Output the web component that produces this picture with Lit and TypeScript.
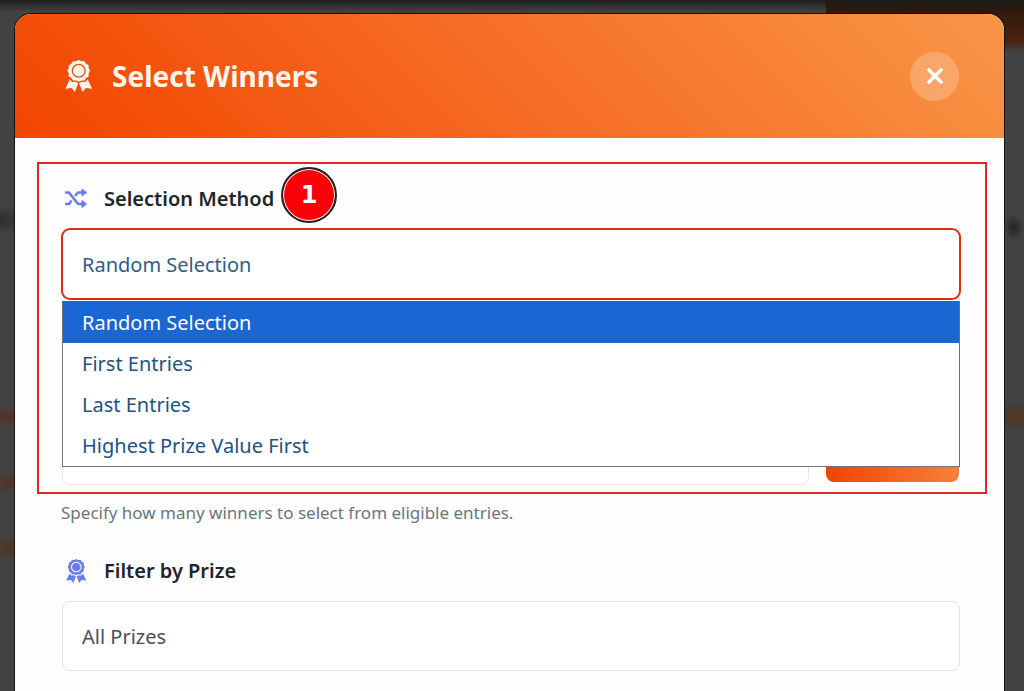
import { LitElement, html, css, svg } from "lit";
import { customElement, property, state } from "lit/decorators.js";

const ribbon = svg`
  <path fill-rule="evenodd" d="M12 0l2.300 1.100 2.700-.1 1.400 2.200 2.400 1.300-.1 2.600 1.200 2.300-1.200 2.300.1 2.700-2.400 1.300-1.400 2.300-2.700-.1L12 19l-2.300-1.100-2.700.1-1.400-2.300-2.400-1.300.1-2.700L2.100 9.400l1.200-2.300-.1-2.600 2.400-1.300L7 1l2.700.1zM12 3.200a6.200 6.200 0 1 0 0 12.400 6.200 6.200 0 0 0 0-12.400z"/>
  <circle cx="12" cy="9.400" r="5"/>
  <path d="M4.200 16.800l2 2.400 3-.1 2.400 1.200L8.600 28l-2.700-3.400-5.600.5zM19.800 16.800l-2 2.400-3-.1-2.400 1.200L15.400 28l2.700-3.400 5.600.5z"/>`;

@customElement("ribbon-icon")
class RibbonIcon extends LitElement {
  static styles = css`
    :host { display: block; }
    svg { display: block; height: 100%; margin: 0 auto; fill: currentColor; }
  `;
  render() {
    return html`<svg viewBox="0 0 24 28" aria-hidden="true">${ribbon}</svg>`;
  }
}

@customElement("option-list")
class OptionList extends LitElement {
  @property({ attribute: false }) options: string[] = [];
  @property() value = "";

  static styles = css`
    :host {
      display: block;
      box-sizing: border-box;
      border: 1px solid #6f7276;
      border-top-color: #1a66d2;
      background: #fff;
    }
    .option {
      display: block;
      width: 100%;
      height: 41px;
      padding: 0 19px;
      border: 0;
      background: none;
      color: #24527f;
      font: inherit;
      line-height: 41px;
      text-align: left;
    }
    .option[aria-selected="true"] { background: #1a66d2; color: #fff; }
  `;
  render() {
    return html`<div role="listbox" aria-label="Selection Method">
      ${this.options.map(
        (o) => html`<button
          class="option"
          role="option"
          aria-selected=${o === this.value ? "true" : "false"}
          @click=${() => this.dispatchEvent(new CustomEvent("pick", { detail: o }))}
        >${o}</button>`
      )}
    </div>`;
  }
}

@customElement("app-root")
class AppRoot extends LitElement {
  @state() private method = "Random Selection";
  private methods = ["Random Selection", "First Entries", "Last Entries", "Highest Prize Value First"];

  static styles = css`
    :host {
      display: block;
      box-sizing: border-box;
      height: 100vh;
      overflow: hidden;
      padding: 14px 20px 0 15px;
      background:
        linear-gradient(#1c1c1c, transparent 12px),
        radial-gradient(closest-side, #55301f, transparent) -10px 406px / 40px 22px no-repeat,
        radial-gradient(closest-side, #55301f, transparent) -10px 471px / 40px 22px no-repeat,
        radial-gradient(closest-side, #55301f, transparent) -10px 537px / 40px 22px no-repeat,
        radial-gradient(closest-side, #2e2e2f, transparent) -30px 206px / 60px 28px no-repeat,
        radial-gradient(closest-side, #523826, #4a382b 60%, transparent) right -20px top 404px / 60px 24px no-repeat,
        radial-gradient(closest-side, #232426, transparent) right 0 top 214px / 20px 26px no-repeat,
        linear-gradient(#2a1408, #4a2410 42px, #424242 52px) right top / 198px 52px no-repeat,
        #424242;
      font-family: "Noto Sans", "Open Sans", sans-serif;
      font-size: 20px;
      color: #212529;
    }
    .modal {
      min-height: 100vh;
      border-radius: 16px 16px 0 0;
      background: #fefefe;
      box-shadow: 0 0 0 1px #111;
    }
    .header {
      display: flex;
      align-items: center;
      gap: 17px;
      height: 124px;
      padding: 0 45px 0 48px;
      border-radius: 16px 16px 0 0;
      background: linear-gradient(45deg, #f24400, #f99648);
      color: #fff6ec;
    }
    .header ribbon-icon { width: 32px; height: 32px; }
    .title { flex: 1; margin: 0; font-size: 28px; line-height: 40px; font-weight: 700; }
    .close {
      display: grid;
      place-items: center;
      width: 49px;
      height: 49px;
      padding: 0;
      border: 0;
      border-radius: 50%;
      background: rgba(255, 255, 255, 0.22);
      color: #fff;
    }
    .close svg { width: 18px; height: 18px; }
    .body { position: relative; display: grid; gap: 32px; padding: 47px 43px 47px 46px; }
    .field { position: relative; }
    .label {
      display: flex;
      align-items: center;
      gap: 16px;
      margin-bottom: 16px;
      padding-left: 3px;
      line-height: 28px;
      font-weight: 600;
    }
    .label svg, .label ribbon-icon { width: 24px; height: 24px; color: #6a7de6; }
    .control {
      display: block;
      box-sizing: border-box;
      flex: 1;
      min-width: 0;
      width: calc(100% - 2px);
      height: 70px;
      margin: 0 1px;
      padding: 0 19px;
      border: 1px solid #e3e6e8;
      border-radius: 8px;
      appearance: none;
      outline: none;
      background: #fff;
      color: #495057;
      font: inherit;
    }
    .control.open { border-color: #e02a12; box-shadow: 0 0 0 1px #e02a12; color: #2f5d84; }
    .row { display: flex; gap: 16px; padding-right: 2px; }
    .max {
      width: 133px;
      height: 67px;
      border: 0;
      border-radius: 8px;
      background: linear-gradient(90deg, #f24400, #f5813a);
    }
    .help { min-height: 24px; margin: 16px 0 0; font-size: 17px; line-height: 24px; color: #6c757d; }
    .spacer { height: 44px; }
    .list { position: absolute; z-index: 1; top: 116px; left: 1px; right: 1px; }
    .callout {
      position: absolute;
      z-index: 2;
      inset: 24px 17px auto 22px;
      box-sizing: border-box;
      height: 332px;
      border: 2px solid #e32626;
      pointer-events: none;
    }
    .badge {
      position: absolute;
      top: 3px;
      left: 242px;
      display: grid;
      place-items: center;
      box-sizing: border-box;
      width: 56px;
      height: 56px;
      border: 2px solid #222;
      border-radius: 50%;
      background: #fb0007;
      box-shadow: inset 0 0 0 1px #fff;
      color: #fff;
      font: bold 24px "DejaVu Sans", sans-serif;
    }
  `;

  render() {
    return html`<section class="modal" role="dialog" aria-labelledby="title">
      <header class="header">
        <ribbon-icon></ribbon-icon>
        <h2 class="title" id="title">Select Winners</h2>
        <button class="close" aria-label="Close">
          <svg viewBox="0 0 18 18" fill="none" stroke="currentColor" stroke-width="3.600" stroke-linecap="round"><path d="M3 3l12 12M15 3L3 15" /></svg>
        </button>
      </header>
      <div class="body">
        <div class="field">
          <label class="label" for="method">
            <svg viewBox="0 0 24 24" fill="none" stroke="currentColor" stroke-width="2.600" stroke-linejoin="round">
              <path d="M1 5.500h4L14 17h5M1 17h4l2.600-3.500M11 9L14 5.500h5" />
              <path d="M18 2l4.500 3.500L18 9zM18 13.500l4.500 3.500-4.500 3.500z" fill="currentColor" stroke-width="1" />
            </svg>
            Selection Method
          </label>
          <select class="control open" id="method" .value=${this.method}>
            ${this.methods.map((m) => html`<option ?selected=${m === this.method}>${m}</option>`)}
          </select>
          <p class="help"></p>
          <option-list
            class="list"
            .options=${this.methods}
            .value=${this.method}
            @pick=${(e: CustomEvent) => (this.method = e.detail)}
          ></option-list>
        </div>
        <div class="field">
          <div class="spacer"></div>
          <div class="row">
            <input class="control" type="text" inputmode="numeric" aria-label="Number of winners" aria-describedby="count-help" />
            <button class="max" aria-label="Use maximum"></button>
          </div>
          <p class="help" id="count-help">Specify how many winners to select from eligible entries.</p>
        </div>
        <div class="field">
          <label class="label" for="prize"><ribbon-icon></ribbon-icon>Filter by Prize</label>
          <select class="control" id="prize"><option>All Prizes</option></select>
        </div>
        <div class="callout"><span class="badge">1</span></div>
      </div>
    </section>`;
  }
}
